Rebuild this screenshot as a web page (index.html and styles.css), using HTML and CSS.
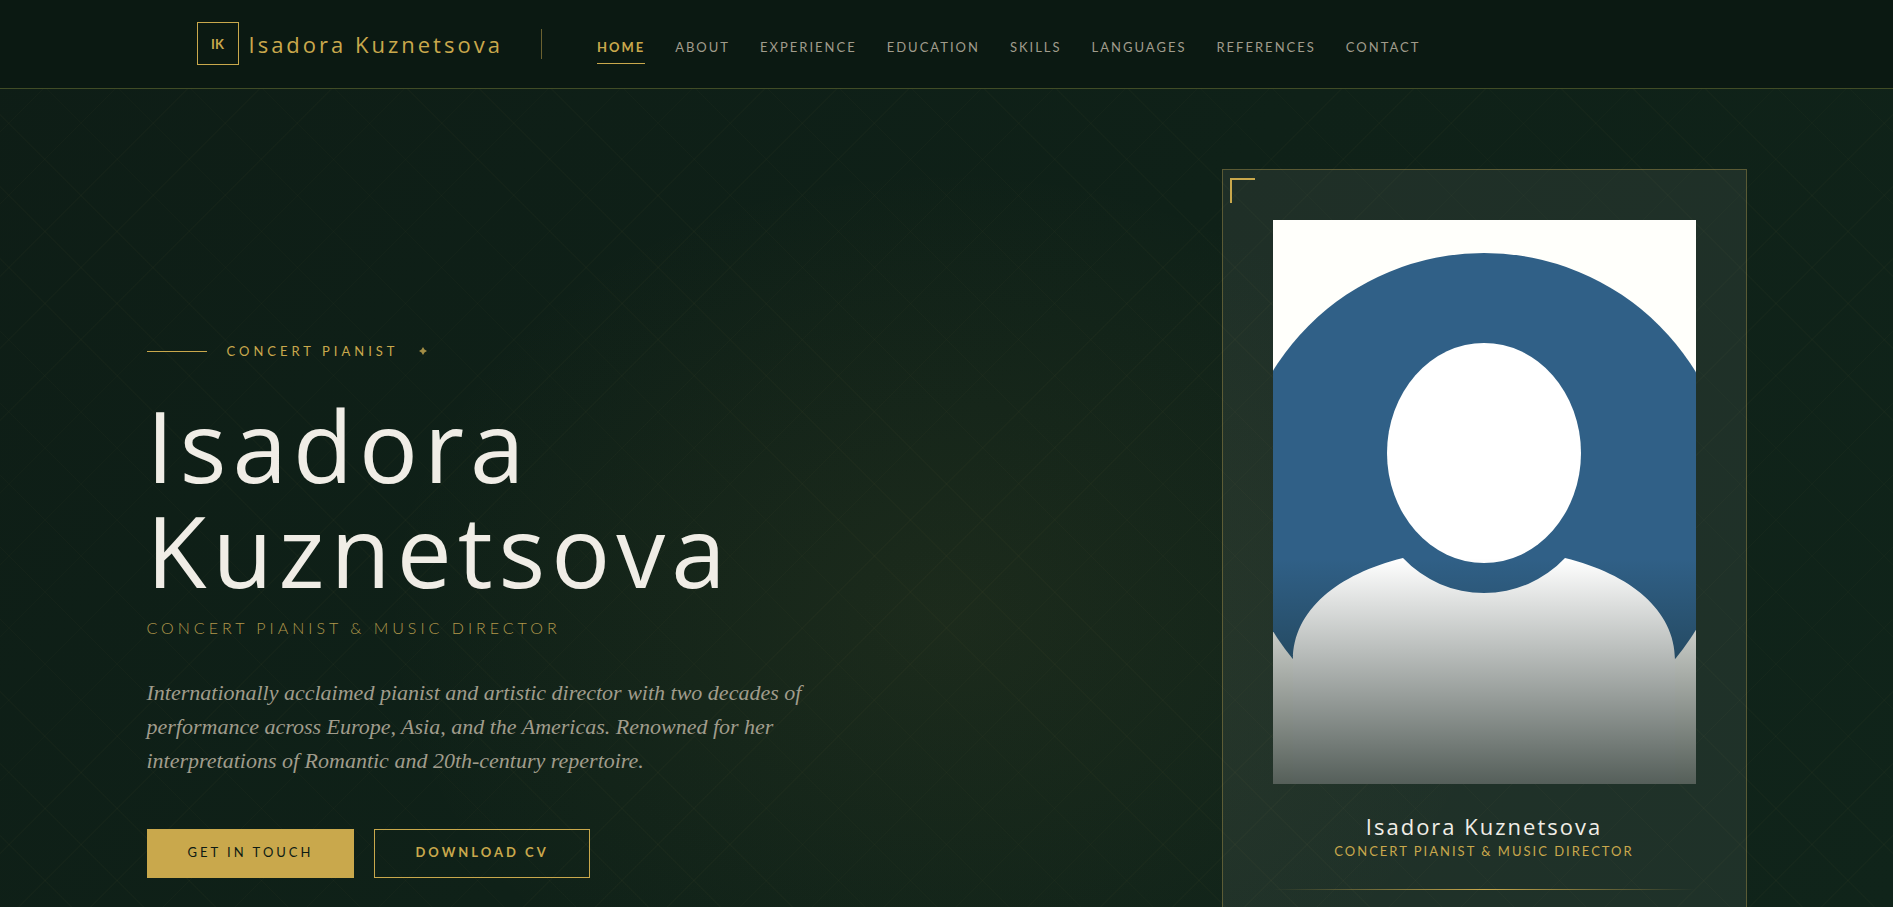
FILE: index.html
```html
<!DOCTYPE html>
<html lang="en">
<head>
  <meta charset="UTF-8">
  <meta name="viewport" content="width=device-width, initial-scale=1.0">
  <title>Isadora Kuznetsova</title>
  <link rel="stylesheet" href="styles.css">
</head>
<body>
  <header class="header">
    <div class="header-inner">
      <a class="logo" href="#home">
        <span class="logo-mark">IK</span>
        <span class="logo-text">Isadora Kuznetsova</span>
      </a>
      <nav class="nav">
        <a class="active" href="#home">Home</a>
        <a href="#about">About</a>
        <a href="#experience">Experience</a>
        <a href="#education">Education</a>
        <a href="#skills">Skills</a>
        <a href="#languages">Languages</a>
        <a href="#references">References</a>
        <a href="#contact">Contact</a>
      </nav>
    </div>
  </header>

  <main class="hero" id="home">
    <div class="hero-content">
      <div class="eyebrow">
        <span class="eyebrow-line"></span>
        <span>Concert Pianist</span>
        <svg class="eyebrow-mark" viewBox="0 0 8 8" aria-hidden="true"><path d="M4 0L5.5 2.5L8 4L5.5 5.5L4 8L2.5 5.5L0 4L2.5 2.5Z"/></svg>
      </div>
      <h1 class="hero-title">Isadora<br>Kuznetsova</h1>
      <p class="hero-subtitle">Concert Pianist &amp; Music Director</p>
      <p class="hero-text">Internationally acclaimed pianist and artistic director with two decades of<br>performance across Europe, Asia, and the Americas. Renowned for her<br>interpretations of Romantic and 20th-century repertoire.</p>
      <div class="hero-buttons">
        <button type="button" class="btn btn-primary">Get in Touch</button>
        <button type="button" class="btn btn-outline">Download CV</button>
      </div>
    </div>

    <aside class="card">
      <div class="portrait">
        <svg viewBox="0 0 423 564" preserveAspectRatio="xMidYMid slice" role="img" aria-label="Portrait">
          <rect width="423" height="564" fill="#fffffb"/>
          <circle cx="211" cy="281" r="248" fill="#306087"/>
          <ellipse cx="211" cy="233" rx="97" ry="110" fill="#fff"/>
          <path d="M20 440C20 390 65 354 130 338A111 111 0 0 0 292 338C357 354 402 390 402 440L402 564H20Z" fill="#fff"/>
        </svg>
      </div>
      <h2 class="card-name">Isadora Kuznetsova</h2>
      <p class="card-role">Concert Pianist &amp; Music Director</p>
      <div class="card-divider"></div>
    </aside>
  </main>
</body>
</html>
```
FILE: styles.css
```css
:root {
  --gold: #c9a84c;
  --cream: #f0ede6;
  --muted: #a09c8c;
  --dark: #0d1b14;
  --sans: Lato, "Open Sans", sans-serif;
  --display: "Open Sans", "Noto Sans", sans-serif;
}
* {
  margin: 0;
  padding: 0;
  box-sizing: border-box;
}
body {
  display: flex;
  flex-direction: column;
  height: 100vh;
  overflow: hidden;
  font-family: var(--sans);
  color: var(--cream);
  background:
    repeating-linear-gradient(45deg, transparent 0 50px, rgba(201, 168, 76, 0.025) 50px 51px),
    repeating-linear-gradient(-45deg, transparent 0 50px, rgba(201, 168, 76, 0.025) 50px 51px),
    radial-gradient(ellipse 30% 50% at 50% 68%, rgba(201, 168, 76, 0.07), transparent),
    linear-gradient(135deg, #0e1d16, #0f2118 50%, #10241a);
}

/* Header */
.header {
  flex: none;
  background: #0b1912;
  border-bottom: 1px solid #414c26;
}
.header-inner {
  display: flex;
  align-items: center;
  max-width: 1600px;
  height: 88px;
  margin: 0 auto;
  padding: 0 50px 1px;
}
.logo {
  display: flex;
  align-items: center;
  gap: 10px;
  padding-right: 38px;
  color: var(--gold);
  text-decoration: none;
}
.logo-mark {
  display: flex;
  align-items: center;
  justify-content: center;
  width: 42px;
  height: 43px;
  border: 1px solid var(--gold);
  font-size: 13px;
  font-weight: 700;
}
.logo-text {
  font-family: var(--display);
  font-size: 22px;
  letter-spacing: 3px;
}
.nav {
  display: flex;
  gap: 30px;
  align-items: center;
  padding-left: 56px;
  position: relative;
}
.nav::before {
  content: "";
  position: absolute;
  left: 0;
  top: 5px;
  width: 1px;
  height: 30px;
  background: #6b6130;
}
.nav a {
  padding: 16px 0 8px;
  border-bottom: 1px solid transparent;
  color: var(--muted);
  font-size: 13px;
  line-height: 15px;
  letter-spacing: 2px;
  text-transform: uppercase;
  text-decoration: none;
}
.nav a.active {
  color: var(--gold);
  border-color: var(--gold);
  font-weight: 700;
}

/* Hero */
.hero {
  flex: 1;
  min-height: 0;
  display: grid;
  grid-template-columns: 1fr 525px;
  width: 100%;
  max-width: 1600px;
  margin: 0 auto;
  padding-top: 80px;
}
.hero-content {
  padding-top: 172px;
}
.eyebrow {
  display: flex;
  align-items: center;
  gap: 20px;
  color: var(--gold);
  font-size: 13px;
  line-height: 20px;
  letter-spacing: 4px;
  text-transform: uppercase;
}
.eyebrow-line {
  width: 60px;
  height: 1px;
  background: var(--gold);
}
.eyebrow-mark {
  width: 8px;
  height: 8px;
  fill: #a38d45;
}
.hero-title {
  margin-top: 32px;
  font-family: var(--display);
  font-size: 98px;
  font-weight: 400;
  line-height: 105px;
  letter-spacing: 6px;
}
.hero-subtitle {
  margin-top: 15px;
  color: #b0974a;
  font-size: 16px;
  font-weight: 300;
  line-height: 20px;
  letter-spacing: 4px;
  text-transform: uppercase;
}
.hero-text {
  margin-top: 38px;
  color: var(--muted);
  font-family: "Liberation Serif", serif;
  font-size: 22px;
  font-style: italic;
  line-height: 34px;
}
.hero-buttons {
  display: flex;
  gap: 20px;
  margin-top: 51px;
}
.btn {
  height: 49px;
  padding: 0 40px 3px;
  border: 1px solid var(--gold);
  font-family: var(--sans);
  font-size: 13px;
  letter-spacing: 3px;
  text-transform: uppercase;
  cursor: pointer;
}
.btn-primary {
  background: var(--gold);
  color: var(--dark);
}
.btn-outline {
  background: transparent;
  color: var(--gold);
  font-weight: 700;
}

/* Portrait card */
.card {
  position: relative;
  padding: 50px 50px 0;
  border: 1px solid rgba(201, 168, 76, 0.35);
  border-bottom: none;
  background: rgba(255, 255, 255, 0.065);
  text-align: center;
}
.card::before {
  content: "";
  position: absolute;
  top: 8px;
  left: 7px;
  width: 23px;
  height: 23px;
  border-top: 2px solid var(--gold);
  border-left: 2px solid var(--gold);
}
.portrait {
  position: relative;
  aspect-ratio: 3 / 4;
}
.portrait svg {
  display: block;
  width: 100%;
  height: 100%;
}
.portrait::after {
  content: "";
  position: absolute;
  inset: 0;
  background: linear-gradient(transparent 60%, rgba(13, 27, 20, 0.7));
}
.card-name {
  margin-top: 27px;
  font-family: var(--display);
  font-size: 22px;
  font-weight: 400;
  line-height: 30px;
  letter-spacing: 2px;
}
.card-role {
  color: var(--gold);
  font-size: 13px;
  line-height: 20px;
  letter-spacing: 2px;
  text-transform: uppercase;
}
.card-divider {
  height: 1px;
  margin-top: 28px;
  background: linear-gradient(to right, transparent, var(--gold), transparent);
}
```
